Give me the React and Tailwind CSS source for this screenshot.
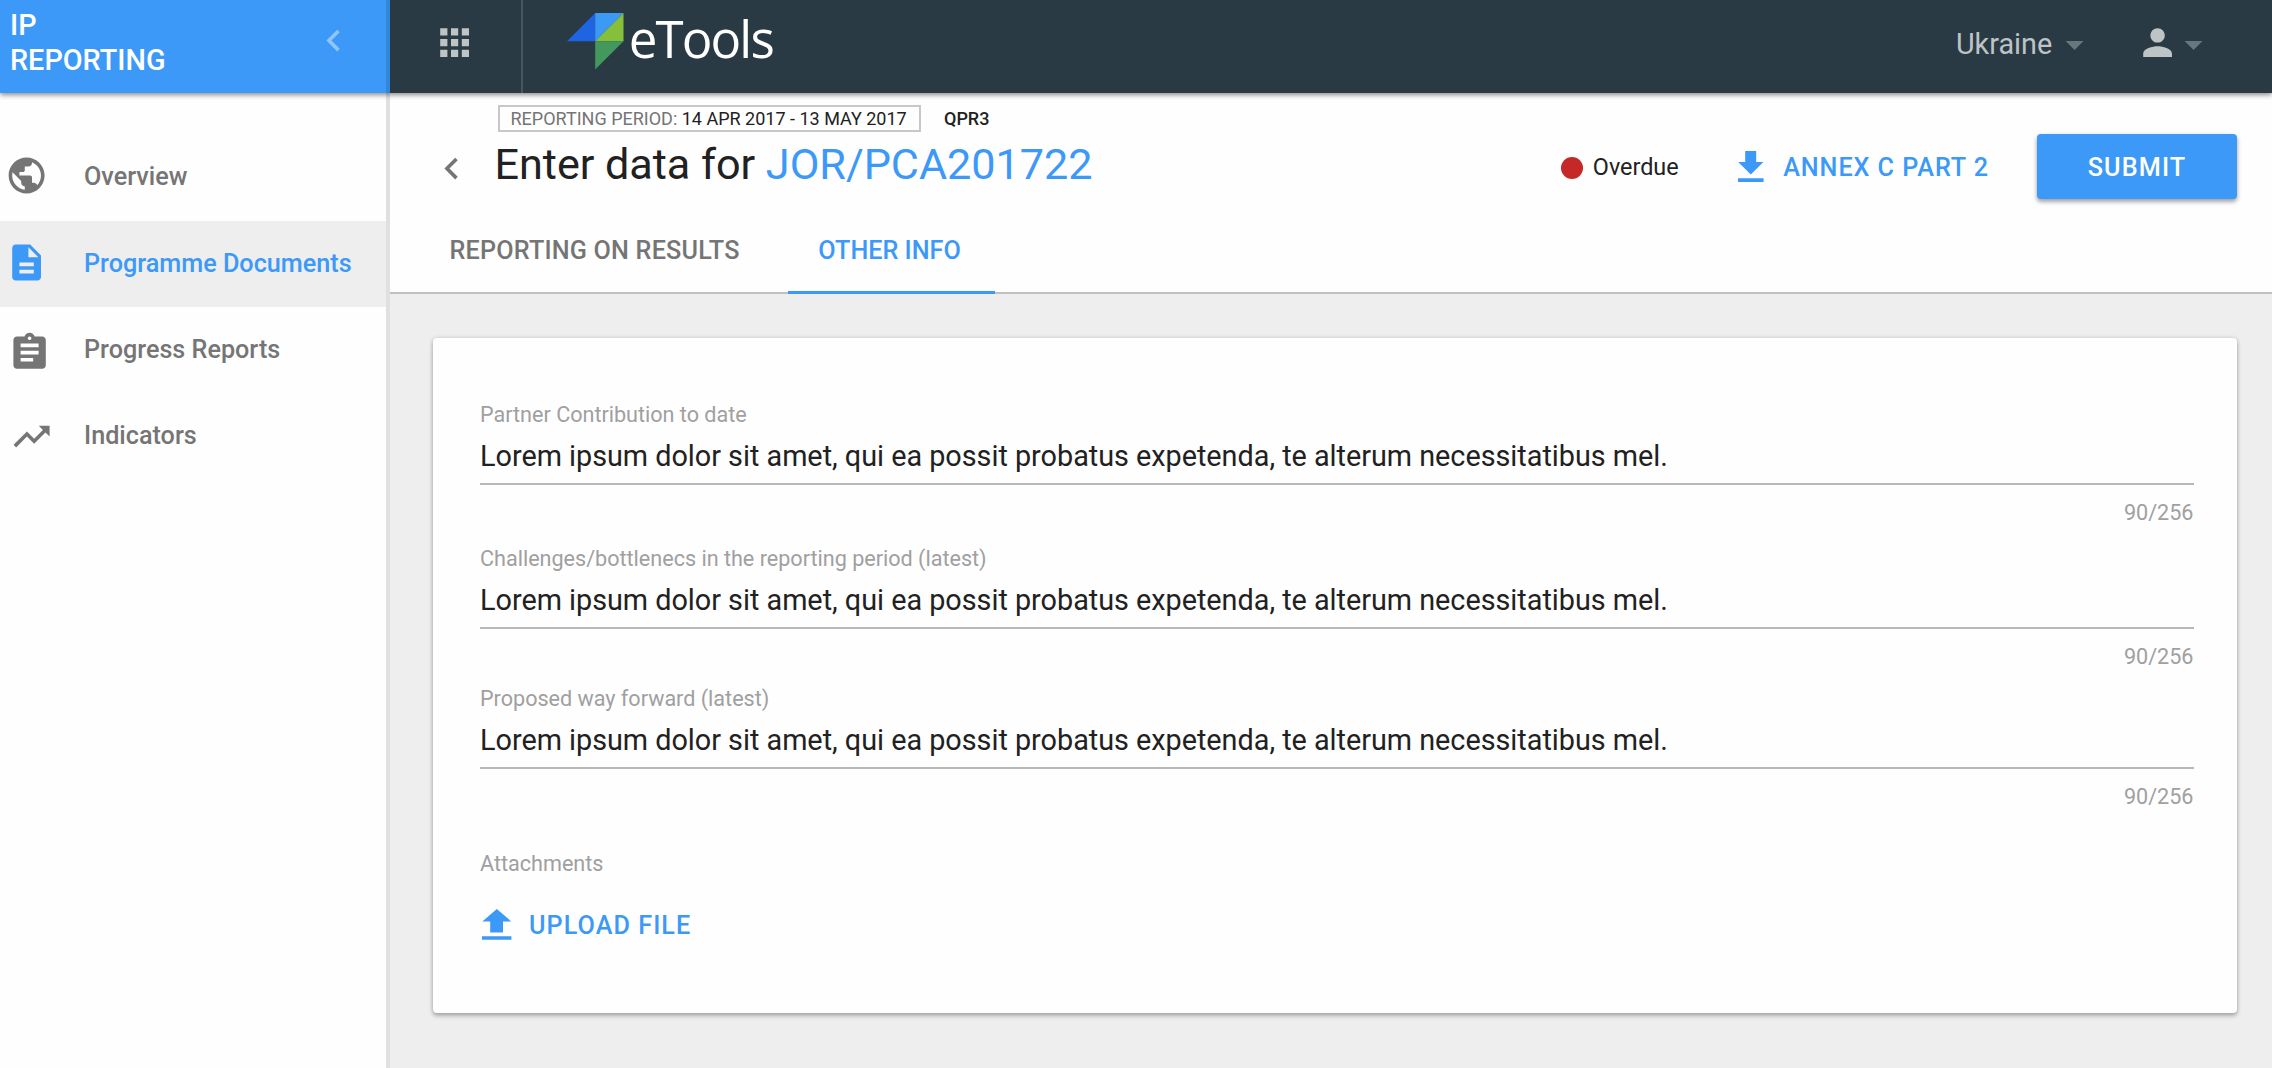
import { MdPublic, MdApps, MdPerson, MdArrowDropDown, MdTrendingUp, MdChevronLeft } from 'react-icons/md';

const LOREM = 'Lorem ipsum dolor sit amet, qui ea possit probatus expetenda, te alterum necessitatibus mel.';

function DocumentIcon({ className }) {
  return (
    <svg viewBox="0 0 24 24" fill="currentColor" className={className}>
      <path d="M14 2H6c-1.1 0-1.99.9-1.99 2L4 20c0 1.1.89 2 1.99 2H18c1.1 0 2-.9 2-2V8l-6-6zm2 16H8v-2h8v2zm0-4H8v-2h8v2zm-3-5V3.5L18.5 9H13z" />
    </svg>
  );
}

function ClipboardIcon({ className }) {
  return (
    <svg viewBox="0 0 24 24" fill="currentColor" className={className}>
      <path d="M19 3h-4.18C14.4 1.84 13.3 1 12 1c-1.3 0-2.4.84-2.82 2H5c-1.1 0-2 .9-2 2v14c0 1.1.9 2 2 2h14c1.1 0 2-.9 2-2V5c0-1.1-.9-2-2-2zm-7 0c.55 0 1 .45 1 1s-.45 1-1 1-1-.45-1-1 .45-1 1-1zm2 14H7v-2h7v2zm3-4H7v-2h10v2zm0-4H7V7h10v2z" />
    </svg>
  );
}

function DownloadIcon({ className }) {
  return (
    <svg viewBox="0 0 26 31" fill="currentColor" className={className}>
      <path d="M7.2 0H18.2V11H25.4L12.8 23.6L.2 11H7.2zM0 27.2H25.6V31H0z" />
    </svg>
  );
}

function UploadIcon({ className }) {
  return (
    <svg viewBox="0 0 30 31" fill="currentColor" className={className}>
      <path d="M14.8 0L29.2 12.4H21V23.4H8.2V12.4H.3zM0 27.2H29.4V30.8H0z" />
    </svg>
  );
}

function Logo() {
  return (
    <div className="flex items-start pl-[43.9px] pt-[13.4px]">
      <svg viewBox="0 0 57 57" className="h-[57px] w-[57px] shrink-0">
        <path d="M0 28.3L28.2 0V28.3z" fill="#1f64e0" />
        <path d="M28.2 0H56.5L28.2 28.3z" fill="#3c9af5" />
        <path d="M56.5 0V28.3H28.2z" fill="#86c03a" />
        <path d="M28.2 28.3H56.5L28.2 56.5z" fill="#43985c" />
      </svg>
      <span className="-mt-[1px] pl-[4.8px] font-['Open_Sans'] text-[51px] leading-[52px] tracking-[-1.85px] text-white">eTools</span>
    </div>
  );
}

const NAV = [
  { label: 'Overview', Icon: MdPublic, pad: 'pl-[4.6px]', iconShift: 'mt-[-3px]' },
  { label: 'Programme Documents', Icon: DocumentIcon, pad: 'pl-[4.8px]', iconShift: 'mt-[-3px]', active: true },
  { label: 'Progress Reports', Icon: ClipboardIcon, pad: 'pl-[8.4px]', iconShift: 'mt-[4px]' },
  { label: 'Indicators', Icon: MdTrendingUp, pad: 'pl-[10.2px]', iconShift: 'mt-0' },
];

function Sidebar() {
  return (
    <nav className="w-[390px] shrink-0 border-r-4 border-[#e0e0e0] bg-[#fefefe] pt-[41.4px]">
      {NAV.map(({ label, Icon, pad, iconShift, active }) => (
        <a
          key={label}
          className={
            'flex h-[86.4px] items-center text-[25.2px] font-medium ' +
            (active ? 'bg-[#eeeeee] text-[#3c99f7]' : 'text-[#757575]')
          }
        >
          <span className={'flex w-[84px] shrink-0 ' + pad}>
            <Icon className={'h-[43.2px] w-[43.2px] shrink-0 ' + iconShift} />
          </span>
          <span className="-mt-[1px]">{label}</span>
        </a>
      ))}
    </nav>
  );
}

function TopBar() {
  return (
    <header className="relative z-10 flex h-[93px] shrink-0 shadow-[0_2px_5px_rgba(0,0,0,0.45)]">
      <div className="flex w-[390px] shrink-0 items-start justify-between border-r-4 border-black/12 bg-[#3c99f7] pl-[10px] pr-[31px]">
        <div className="w-[160px] pt-[8px] text-[28.8px] font-medium leading-[34.5px] text-white">
          IP
          <br />
          REPORTING
        </div>
        <MdChevronLeft className="mt-[19.4px] h-[43.2px] w-[43.2px] text-[#90c5fa]" />
      </div>
      <div className="flex grow bg-[#293a44]">
        <div className="w-[133px] shrink-0 border-r-2 border-[#46555e] pl-[43px] pt-[21px]">
          <MdApps className="h-[43.2px] w-[43.2px] text-[#bec3c6]" />
        </div>
        <Logo />
        <div className="ml-auto flex items-start pr-[56.6px]">
          <span className="pr-[0.6px] pt-[24px] text-[28.8px] leading-[40px] text-[#bec3c6]">Ukraine</span>
          <MdArrowDropDown className="mt-[22.7px] h-[43.2px] w-[43.2px] text-[#68767d]" />
          <MdPerson className="ml-[39.5px] mt-[21px] h-[43.2px] w-[43.2px] text-[#bec3c6]" />
          <MdArrowDropDown className="-ml-[6.5px] mt-[22.7px] h-[43.2px] w-[43.2px] text-[#68767d]" />
        </div>
      </div>
    </header>
  );
}

function PageHeader() {
  return (
    <div className="flex h-[201px] shrink-0 flex-col justify-between border-b-2 border-[#c0c0c0] bg-[#fefefe]">
      <div className="flex items-start justify-between pl-[39.8px] pr-[35px]">
        <div className="flex items-start">
          <MdChevronLeft className="mt-[54.4px] h-[43.2px] w-[43.2px] text-[#757575]" />
          <div className="pl-[21.5px] pt-[12px]">
            <div className="flex h-[27px] items-center pl-[3.5px] text-[18px] leading-[23px]">
              <span className="flex h-[27px] w-[423px] items-center whitespace-pre border-2 border-[#c8c8c8] pl-[10.5px] text-[#757575]">
                REPORTING PERIOD: <span className="text-[#212121]">14 APR 2017 - 13 MAY 2017</span>
              </span>
              <span className="pl-[23px] font-medium text-[#212121]">QPR3</span>
            </div>
            <h1 className="mt-[8px] text-[43.2px] leading-[50px] tracking-[-0.04px] text-[#212121]">
              Enter data for <span className="text-[#3c99f7]">JOR/PCA201722</span>
            </h1>
          </div>
        </div>
        <div className="mt-[41px] flex h-[65px] items-center">
          <span className="mt-[3px] h-[22px] w-[22px] rounded-full bg-[#c62828]" />
          <span className="mt-[3px] pl-[10px] text-[23.4px] text-[#212121]">Overdue</span>
          <DownloadIcon className="ml-[59.5px] h-[31px] w-[26px] text-[#3c99f7]" />
          <span className="mt-[3px] pl-[19px] text-[25.2px] font-medium tracking-[0.93px] text-[#3c99f7]">ANNEX C PART 2</span>
          <button className="ml-[48px] h-[65px] w-[200px] rounded-[4px] bg-[#3c99f7] pt-[2px] text-[25.2px] font-medium tracking-[1.15px] text-white shadow-[0_3px_4px_rgba(0,0,0,0.3),0_1px_5px_rgba(0,0,0,0.12)]">
            SUBMIT
          </button>
        </div>
      </div>
      <div className="-mb-[2px] flex h-[86px] text-[25.2px] font-medium tracking-[0.18px]">
        <div className="flex w-[398px] items-center pl-[59.5px] text-[#757575]">REPORTING ON RESULTS</div>
        <div className="flex w-[207px] items-center border-b-[3px] border-[#3c99f7] pl-[30.3px] pt-[3px] tracking-normal text-[#3c99f7]">OTHER INFO</div>
      </div>
    </div>
  );
}

function Field({ label, className }) {
  return (
    <div className={className}>
      <div className="text-[21.6px] leading-[26px] tracking-[-0.01px] text-[#a0a0a0]">{label}</div>
      <div className="border-b-2 border-[#b8b8b8] text-[28.8px] tracking-[-0.015px] text-[#212121]">
        <div className="pt-[2px] leading-[53px]">{LOREM}</div>
      </div>
      <div className="text-right text-[21.6px] leading-[55px] text-[#a0a0a0]">90/256</div>
    </div>
  );
}

export default function App() {
  return (
    <div className="flex h-[1068px] w-[2272px] flex-col overflow-hidden bg-[#eeeeee] font-['Roboto',sans-serif]">
      <TopBar />
      <div className="flex grow">
        <Sidebar />
        <main className="flex grow flex-col">
          <PageHeader />
          <section className="ml-[43px] mr-[35px] mt-[44px] h-[675px] rounded-[4px] bg-[#fefefe] pl-[47px] pr-[43.5px] pt-[64px] shadow-[0_3px_4px_rgba(0,0,0,0.25),0_0px_4px_rgba(0,0,0,0.16)]">
            <Field label="Partner Contribution to date" className="mb-[6px]" />
            <Field label="Challenges/bottlenecs in the reporting period (latest)" className="mb-[2px]" />
            <Field label="Proposed way forward (latest)" className="mb-[27px]" />
            <div className="text-[21.6px] leading-[26px] text-[#a0a0a0]">Attachments</div>
            <div className="mt-[28px] flex h-[40px] items-center pl-[2px] text-[#3c99f7]">
              <UploadIcon className="mt-[-1px] h-[31px] w-[30px]" />
              <span className="pl-[17px] pt-[2px] text-[25.2px] font-medium tracking-[1.05px]">UPLOAD FILE</span>
            </div>
          </section>
        </main>
      </div>
    </div>
  );
}
